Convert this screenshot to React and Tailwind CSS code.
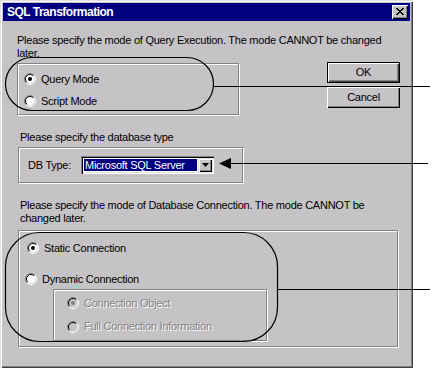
import React from "react";

function Radio({ checked = false, disabled = false }) {
  return (
    <svg width="12" height="12" viewBox="0 0 12 12" className="shrink-0">
      <circle cx="6" cy="6" r="4.5" fill={disabled ? "#c6c3c6" : "#ffffff"} />
      <path d="M 2.1 9.9 A 5.5 5.5 0 0 1 9.9 2.1" stroke="#848284" strokeWidth="1" fill="none" />
      <path d="M 9.9 2.1 A 5.5 5.5 0 0 1 2.1 9.9" stroke="#ffffff" strokeWidth="1" fill="none" />
      <path d="M 2.8 9.2 A 4.5 4.5 0 0 1 9.2 2.8" stroke="#000000" strokeWidth="1" fill="none" />
      <path d="M 9.2 2.8 A 4.5 4.5 0 0 1 2.8 9.2" stroke="#dedfde" strokeWidth="1" fill="none" />
      {checked && <circle cx="6" cy="6" r="2" fill={disabled ? "#848284" : "#000000"} />}
    </svg>
  );
}

const etched =
  "border border-[#848284] shadow-[inset_1px_1px_0_#ffffff,1px_1px_0_#ffffff]";

export default function App() {
  return (
    <div
      className="relative w-[432px] h-[368px] bg-white overflow-hidden text-[11px] leading-[13px] tracking-[-0.25px] text-black"
      style={{ fontFamily: '"Liberation Sans", Arial, sans-serif' }}
    >
      <div className="w-[413px] h-[368px] bg-[#c6c3c6] pt-[3px] px-[3px] flex flex-col shadow-[inset_1px_1px_0_#dedfde,inset_2px_2px_0_#ffffff,inset_-1px_-1px_0_#424142,inset_-2px_-2px_0_#848284]">
        {/* Title bar */}
        <div className="h-[18px] bg-[#000080] flex items-center justify-between pl-[4px] pr-[2px]">
          <span className="text-white font-bold text-[12px] leading-[14px] tracking-[-0.5px]">SQL Transformation</span>
          <div className="w-[16px] h-[14px] bg-[#c6c3c6] flex items-center justify-center shadow-[inset_1px_1px_0_#ffffff,inset_-1px_-1px_0_#000000,inset_-2px_-2px_0_#848284]">
            <svg width="8" height="7" viewBox="0 0 8 7" className="mb-[1px]">
              <path d="M0 0h2v1H0zM6 0h2v1H6zM1 1h2v1H1zM5 1h2v1H5zM2 2h4v1H2zM3 3h2v1H3zM2 4h4v1H2zM1 5h2v1H1zM5 5h2v1H5zM0 6h2v1H0zM6 6h2v1H6z" fill="#000" />
            </svg>
          </div>
        </div>

        {/* Content */}
        <div className="flex flex-col pl-[14px]">
          <p className="mt-[13px] w-[372px]">
            Please specify the mode of Query Execution. The mode CANNOT be changed later.
          </p>

          <div className="flex mt-[2px]">
            <div className={`${etched} mt-[1px] w-[222px] h-[52px] flex flex-col pt-[4px] pl-[6px]`}>
              <div className="h-[22px] flex items-center gap-[5px]">
                <Radio checked />
                <span>Query Mode</span>
              </div>
              <div className="h-[22px] flex items-center gap-[5px]">
                <Radio />
                <span>Script Mode</span>
              </div>
            </div>
            <div className="ml-[88px] flex flex-col gap-[4px]">
              <div className="w-[73px] h-[21px] border border-black flex items-center justify-center shadow-[inset_1px_1px_0_#ffffff,inset_-1px_-1px_0_#424142,inset_-2px_-2px_0_#848284]">
                OK
              </div>
              <div className="w-[73px] h-[21px] flex items-center justify-center shadow-[inset_1px_1px_0_#ffffff,inset_-1px_-1px_0_#000000,inset_-2px_-2px_0_#848284]">
                Cancel
              </div>
            </div>
          </div>

          <p className="mt-[16px] ml-[3px]">Please specify the database type</p>

          <div className={`${etched} mt-[3px] ml-[1px] w-[225px] h-[36px] flex items-center pl-[9px]`}>
            <span className="w-[53px]">DB Type:</span>
            <div className="w-[133px] h-[18px] bg-white flex p-[2px] shadow-[inset_1px_1px_0_#848284,inset_2px_2px_0_#000000,inset_-1px_-1px_0_#ffffff,inset_-2px_-2px_0_#dedfde]">
              <div className="flex-1 flex items-center p-[1px]">
                <div className="flex-1 h-full bg-[#000080] text-white flex items-center pl-[1px]">
                  Microsoft SQL Server
                </div>
              </div>
              <div className="w-[14px] h-full bg-[#c6c3c6] flex items-center justify-center shadow-[inset_1px_1px_0_#dedfde,inset_2px_2px_0_#ffffff,inset_-1px_-1px_0_#000000,inset_-2px_-2px_0_#848284]">
                <svg width="7" height="4" viewBox="0 0 7 4">
                  <path d="M0 0h7L3.5 4z" fill="#000" />
                </svg>
              </div>
            </div>
          </div>

          <p className="mt-[16px] ml-[3px] w-[352px]">
            Please specify the mode of Database Connection. The mode CANNOT be changed later.
          </p>

          <div className={`${etched} mt-[5px] ml-[1px] w-[380px] h-[117px] flex flex-col pt-[7px]`}>
            <div className="h-[20px] flex items-center gap-[5px] pl-[8px]">
              <Radio checked />
              <span>Static Connection</span>
            </div>
            <div className="mt-[11px] h-[20px] flex items-center gap-[5px] pl-[6px]">
              <Radio />
              <span>Dynamic Connection</span>
            </div>
            <div className={`${etched} ml-[34px] w-[214px] h-[52px] flex flex-col pt-[2px] pl-[13px] text-[#848284] [text-shadow:1px_1px_0_#ffffff]`}>
              <div className="h-[22px] flex items-center gap-[5px]">
                <Radio checked disabled />
                <span>Connection Object</span>
              </div>
              <div className="h-[25px] flex items-center gap-[5px]">
                <Radio disabled />
                <span>Full Connection Information</span>
              </div>
            </div>
          </div>
        </div>
      </div>

      {/* Annotation overlay */}
      <svg className="absolute inset-0 pointer-events-none" width="432" height="368" viewBox="0 0 432 368">
        <rect x="5.5" y="57.5" width="208" height="53" rx="26.5" ry="26.5" fill="none" stroke="#000" strokeWidth="1.2" />
        <line x1="213" y1="86.5" x2="430" y2="86.5" stroke="#000" strokeWidth="1.2" />
        <line x1="228" y1="163.5" x2="428" y2="163.5" stroke="#000" strokeWidth="1.2" />
        <polygon points="219,163.5 231,158 231,169" fill="#000" />
        <rect x="5.5" y="232.5" width="272" height="109" rx="34" ry="34" fill="none" stroke="#000" strokeWidth="1.2" />
        <line x1="277.5" y1="289.5" x2="430" y2="289.5" stroke="#000" strokeWidth="1.2" />
      </svg>
    </div>
  );
}
